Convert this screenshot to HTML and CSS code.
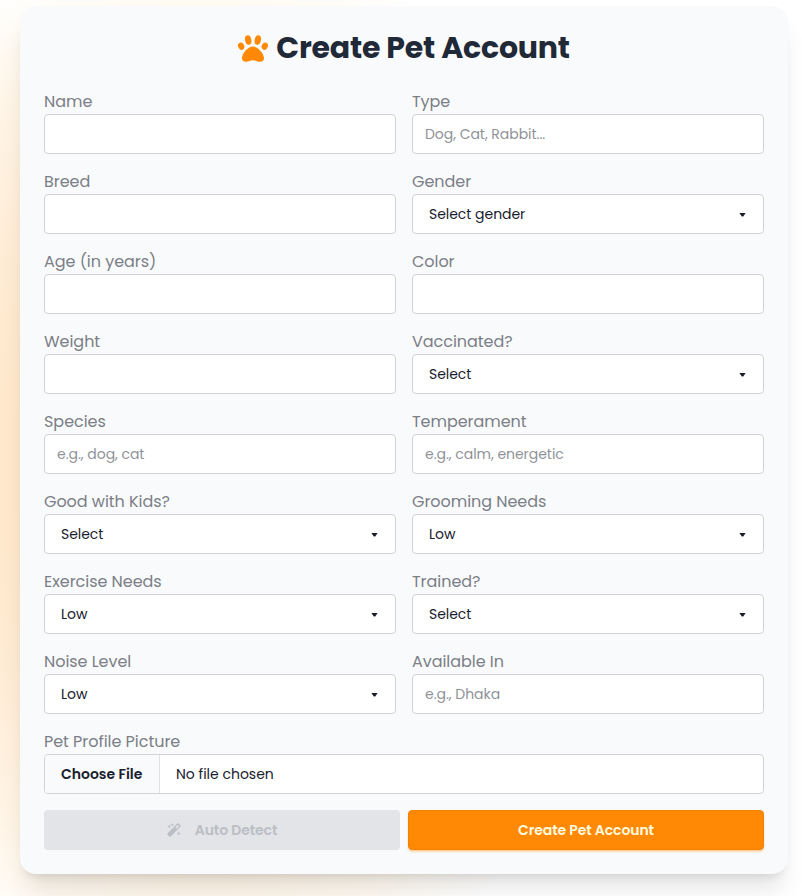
FILE: index.html
```html
<!DOCTYPE html>
<html lang="en">
<head>
<meta charset="utf-8">
<title>Create Pet Account</title>
<link rel="stylesheet" href="styles.css">
</head>
<body>
<main class="page">
<form class="card">
<h1 class="title"><svg class="paw" viewBox="0 0 30 27"><ellipse cx="3.2" cy="11.2" rx="3" ry="3.7" transform="rotate(-22 3.2 11.2)"/><ellipse cx="10.2" cy="5" rx="3.1" ry="4.8" transform="rotate(-12 10.2 5)"/><ellipse cx="19.8" cy="5" rx="3.1" ry="4.8" transform="rotate(12 19.8 5)"/><ellipse cx="26.8" cy="11.2" rx="3" ry="3.7" transform="rotate(22 26.8 11.2)"/><path d="M15 11.6C9.8 11.6 4 18.7 4 23.2c0 2.3 1.5 3.5 3.9 3.5 2.7 0 4.7-1.4 7.1-1.4s4.4 1.4 7.1 1.4c2.4 0 3.9-1.2 3.9-3.5 0-4.5-5.8-11.6-11-11.6z"/></svg><span>Create Pet Account</span></h1>
<div class="fields">
<div class="field"><label class="label">Name</label><input class="control"></div>
<div class="field"><label class="label">Type</label><input class="control" placeholder="Dog, Cat, Rabbit..."></div>
<div class="field"><label class="label">Breed</label><input class="control"></div>
<div class="field"><label class="label">Gender</label><div class="control select"><span>Select gender</span><i class="caret"></i></div></div>
<div class="field"><label class="label">Age (in years)</label><input class="control"></div>
<div class="field"><label class="label">Color</label><input class="control"></div>
<div class="field"><label class="label">Weight</label><input class="control"></div>
<div class="field"><label class="label">Vaccinated?</label><div class="control select"><span>Select</span><i class="caret"></i></div></div>
<div class="field"><label class="label">Species</label><input class="control" placeholder="e.g., dog, cat"></div>
<div class="field"><label class="label">Temperament</label><input class="control" placeholder="e.g., calm, energetic"></div>
<div class="field"><label class="label">Good with Kids?</label><div class="control select"><span>Select</span><i class="caret"></i></div></div>
<div class="field"><label class="label">Grooming Needs</label><div class="control select"><span>Low</span><i class="caret"></i></div></div>
<div class="field"><label class="label">Exercise Needs</label><div class="control select"><span>Low</span><i class="caret"></i></div></div>
<div class="field"><label class="label">Trained?</label><div class="control select"><span>Select</span><i class="caret"></i></div></div>
<div class="field"><label class="label">Noise Level</label><div class="control select"><span>Low</span><i class="caret"></i></div></div>
<div class="field"><label class="label">Available In</label><input class="control" placeholder="e.g., Dhaka"></div>
<div class="field wide"><label class="label">Pet Profile Picture</label><div class="control file"><span class="choose">Choose File</span><span class="chosen">No file chosen</span></div></div>
</div>
<div class="actions">
<button class="btn detect" type="button" disabled><svg class="wand" viewBox="0 0 16 16"><path d="M11.7.7.7 11.7a1.2 1.2 0 0 0 0 1.7l1.9 1.9a1.2 1.2 0 0 0 1.7 0l11-11a1.2 1.2 0 0 0 0-1.7L13.4.7a1.2 1.2 0 0 0-1.7 0zM11 6.6 9.4 5l3.1-3L14 3.5z" fill-rule="evenodd"/><path d="m6 0 .6 1.4L8 2l-1.4.6L6 4l-.6-1.4L4 2l1.4-.6zM2.5 1.5l.7 1.8 1.8.7-1.8.7-.7 1.8-.7-1.8L0 4l1.8-.7zM13.5 9.5l.7 1.8 1.8.7-1.8.7-.7 1.8-.7-1.8L11 12l1.8-.7z"/></svg><span>Auto Detect</span></button>
<button class="btn create" type="button">Create Pet Account</button>
</div>
</form>
</main>
</body>
</html>
```
FILE: styles.css
```css
* { box-sizing: border-box; }
body { margin: 0; background: #fff; font-family: Poppins, Inter, sans-serif; color: #1f2937; }
.page { height: 896px; padding: 6px 14px 22px 20px; overflow: hidden; background: radial-gradient(circle at 200px 465px, #ffe3bd 0, #ffe8cb 200px, #ffeeda 320px, #fff5e7 410px, #fffaf2 460px, #fff 510px); }
.card { width: 768px; height: 868px; padding: 24px; border-radius: 16px; background: #f9fafb; box-shadow: 0 20px 25px -5px rgba(0,0,0,.1), 0 8px 10px -6px rgba(0,0,0,.1); }
.title { display: flex; align-items: center; justify-content: center; gap: 8px; height: 36px; margin: 0 0 24px; font-size: 30px; line-height: 36px; font-weight: 700; letter-spacing: -.22px; white-space: nowrap; }
.paw { width: 30px; height: 27px; fill: #ff8904; }
.fields { display: grid; grid-template-columns: 1fr 1fr; gap: 16px; }
.wide { grid-column: 1 / -1; }
.label { display: block; height: 24px; font-size: 16px; line-height: 24px; letter-spacing: -.04px; color: #7b7f87; }
.control { display: block; width: 100%; height: 40px; padding: 0 12px; border: 1px solid #d1d3d7; border-radius: 4px; background: #fff; font: 14px/20px Poppins, Inter, sans-serif; letter-spacing: -.04px; color: #18202c; }
.control::placeholder { color: #8f9399; opacity: 1; }
.select { display: flex; align-items: center; justify-content: space-between; padding: 0 16px; }
.caret { width: 7px; height: 4px; margin: 1px 1px 0 0; background: #18202c; clip-path: polygon(0 0, 100% 0, 60% 100%, 40% 100%); }
.file { display: flex; align-items: center; padding: 0; overflow: hidden; }
.choose { width: 115px; height: 38px; padding-left: 16px; border-right: 1px solid #dfe2e6; background: #f9fafb; font-weight: 600; line-height: 38px; letter-spacing: 0; white-space: nowrap; }
.chosen { padding-left: 16px; letter-spacing: 0; }
.actions { display: grid; grid-template-columns: 1fr 1fr; gap: 8px; margin-top: 16px; }
.btn { display: flex; align-items: center; justify-content: center; height: 40px; padding: 0; border: 0; border-radius: 4px; font: 600 14px/20px Poppins, Inter, sans-serif; letter-spacing: -.1px; }
.detect { gap: 14px; background: #e2e4e8; color: #bbbec4; }
.wand { width: 14px; height: 14px; fill: #bbbec4; }
.create { background: #ff8904; border: 1px solid #f08104; color: #fffbe0; box-shadow: 0 2px 3px -1px rgba(255,137,4,.6); }
```
